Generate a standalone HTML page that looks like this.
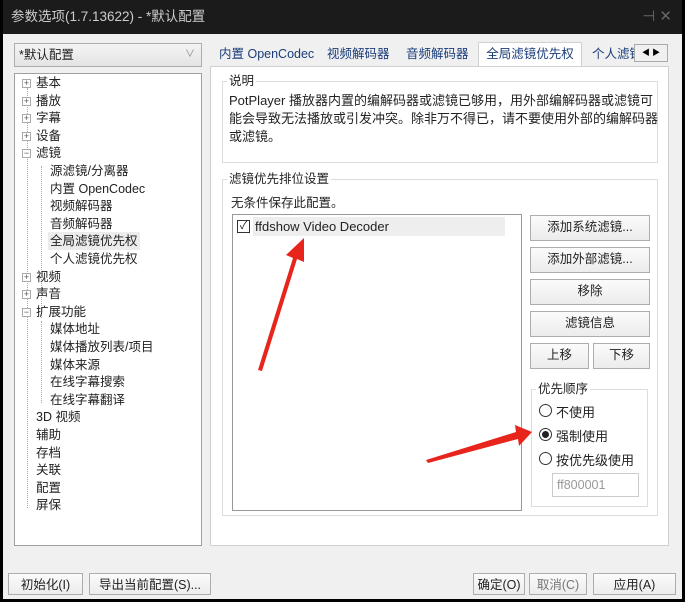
<!DOCTYPE html>
<html><head><meta charset="utf-8"><style>
*{box-sizing:border-box;margin:0;padding:0}
body{width:685px;height:602px;background:#000;position:relative;overflow:hidden;font-family:"Liberation Sans","Noto Sans CJK SC",sans-serif;font-size:12.5px;color:#222}
.a{position:absolute}
.win{left:3px;top:0;width:679px;height:599px;background:#f0f0f0}
.title{left:3px;top:0;width:679px;height:34px;background:#1b1b1b;color:#ccc;font-size:13.5px;line-height:34px;padding-left:8px}
.btn{position:absolute;background:linear-gradient(#fbfbfb,#ececec);border:1px solid #adadad;text-align:center;font-size:12.5px;line-height:22px;color:#222}
.ti{position:absolute;left:36px;height:18px;line-height:18px;font-size:12.5px}
.pm{position:absolute;left:22px;width:9px;height:9px;border:1px solid #aaa;background:#fff;font-size:9px;line-height:7px;text-align:center;color:#555}
.grp{position:absolute;border:1px solid #dcdcdc}
.gl{position:absolute;background:#fff;padding:0 2px;font-size:12.5px;line-height:14px}
.rad{position:absolute;width:13px;height:13px;border:1px solid #333;border-radius:50%;background:#fff}
</style></head><body>
<div class="a win"></div>
<div class="a title">参数选项(1.7.13622) - *默认配置<span style="position:absolute;right:10px;color:#666;font-size:15px">⊣ ✕</span></div>

<div class="a" style="left:14px;top:43px;width:188px;height:24px;background:linear-gradient(#f4f4f4,#e4e4e4);border:1px solid #adadad;line-height:22px;padding-left:4px">*默认配置<span style="position:absolute;right:6px;color:#888;font-size:10px">∨</span></div>

<div class="a" style="left:14px;top:73px;width:188px;height:473px;background:#fff;border:1px solid #a0a0a0">
<div class="a" style="left:12px;top:14px;height:420px;border-left:1px dotted #aaa"></div>
<div class="a" style="left:26px;top:92px;height:152px;border-left:1px dotted #aaa"></div>
<div class="a" style="left:26px;top:247px;height:82px;border-left:1px dotted #aaa"></div>
</div>
<div id="tree"></div>

<div class="a" style="left:210px;top:43px;width:458px;height:24px;font-size:12.5px;line-height:22px;color:#1a3d7a">
<span class="a" style="left:9px">内置 OpenCodec</span>
<span class="a" style="left:117px">视频解码器</span>
<span class="a" style="left:196px">音频解码器</span>
<span class="a" style="left:268px;top:-1px;width:104px;height:25px;background:#fff;border:1px solid #d0d0d0;border-bottom:none;text-align:center">全局滤镜优先权</span>
<span class="a" style="left:382px">个人滤镜</span>
<span class="a" style="left:424px;top:1px;width:34px;height:18px;background:#f0f0f0;border:1px solid #aaa;font-size:8px;line-height:16px;color:#000;text-align:center">◀ ▶</span>
</div>
<div class="a" style="left:210px;top:66px;width:459px;height:480px;background:#fff;border:1px solid #d0d0d0"></div>

<div class="grp" style="left:222px;top:81px;width:436px;height:82px"></div>
<div class="gl" style="left:227px;top:74px">说明</div>
<div class="a" style="left:229px;top:92px;width:434px;line-height:18px;font-size:13px">PotPlayer 播放器内置的编解码器或滤镜已够用，用外部编解码器或滤镜可能会导致无法播放或引发冲突。除非万不得已，请不要使用外部的编解码器或滤镜。</div>

<div class="grp" style="left:222px;top:179px;width:436px;height:337px"></div>
<div class="gl" style="left:227px;top:172px">滤镜优先排位设置</div>
<div class="a" style="left:231px;top:192px">无条件保存此配置。</div>
<div class="a" style="left:232px;top:214px;width:290px;height:297px;border:1px solid #999;background:#fff">
<div class="a" style="left:20px;top:2px;width:252px;height:19px;background:#eeeeee"></div>
<div class="a" style="left:4px;top:5px;width:13px;height:13px;border:1px solid #333;font-size:11px;line-height:11px;text-align:center">✓</div>
<div class="a" style="left:22px;top:3px;line-height:17px;font-size:13px">ffdshow Video Decoder</div>
</div>
<div class="btn" style="left:530px;top:215px;width:120px;height:26px">添加系统滤镜...</div>
<div class="btn" style="left:530px;top:247px;width:120px;height:26px">添加外部滤镜...</div>
<div class="btn" style="left:530px;top:279px;width:120px;height:26px">移除</div>
<div class="btn" style="left:530px;top:311px;width:120px;height:26px">滤镜信息</div>
<div class="btn" style="left:530px;top:343px;width:59px;height:26px">上移</div>
<div class="btn" style="left:593px;top:343px;width:57px;height:26px">下移</div>

<div class="grp" style="left:531px;top:389px;width:117px;height:118px"></div>
<div class="gl" style="left:536px;top:382px">优先顺序</div>
<div class="rad" style="left:539px;top:404px"></div><div class="a" style="left:556px;top:402px;font-size:13px">不使用</div>
<div class="rad" style="left:539px;top:428px"><div class="a" style="left:2px;top:2px;width:7px;height:7px;border-radius:50%;background:#222"></div></div><div class="a" style="left:556px;top:426px;font-size:13px">强制使用</div>
<div class="rad" style="left:539px;top:452px"></div><div class="a" style="left:556px;top:450px;font-size:13px">按优先级使用</div>
<div class="a" style="left:552px;top:473px;width:87px;height:24px;border:1px solid #ccc;color:#999;line-height:22px;padding-left:4px">ff800001</div>

<svg class="a" style="left:0;top:0" width="685" height="602">
<path d="M258 370 L293 258 L286 255 L304 238 L304 262 L297 259 L262 371 Z" fill="#e8251c"/>
<path d="M428 463 L518 439 L519 446 L532 432 L515 425 L516 432 L426 460 Z" fill="#e8251c"/>
</svg>

<div class="btn" style="left:8px;top:573px;width:75px;height:22px">初始化(I)</div>
<div class="btn" style="left:89px;top:573px;width:122px;height:22px">导出当前配置(S)...</div>
<div class="btn" style="left:473px;top:573px;width:52px;height:22px">确定(O)</div>
<div class="btn" style="left:529px;top:573px;width:58px;height:22px;color:#777">取消(C)</div>
<div class="btn" style="left:593px;top:573px;width:83px;height:22px">应用(A)</div>

<script>
var items=[["基本",0,1],["播放",0,1],["字幕",0,1],["设备",0,1],["滤镜",0,2],["源滤镜/分离器",1],["内置 OpenCodec",1],["视频解码器",1],["音频解码器",1],["全局滤镜优先权",1,0,1],["个人滤镜优先权",1],["视频",0,1],["声音",0,1],["扩展功能",0,2],["媒体地址",1],["媒体播放列表/项目",1],["媒体来源",1],["在线字幕搜索",1],["在线字幕翻译",1],["3D 视频",0],["辅助",0],["存档",0],["关联",0],["配置",0],["屏保",0]];
var h="";items.forEach(function(it,i){var y=74+i*17.6;
if(it[2])h+='<div class="pm" style="top:'+(y+5)+'px">'+(it[2]==1?'+':'−')+'</div>';
h+='<div class="ti" style="top:'+y+'px;left:'+(it[1]?50:36)+'px;'+(it[3]?'background:#ececec;padding:0 2px;margin-left:-2px':'')+'">'+it[0]+'</div>';});
document.getElementById('tree').innerHTML=h;
</script>
</body></html>
